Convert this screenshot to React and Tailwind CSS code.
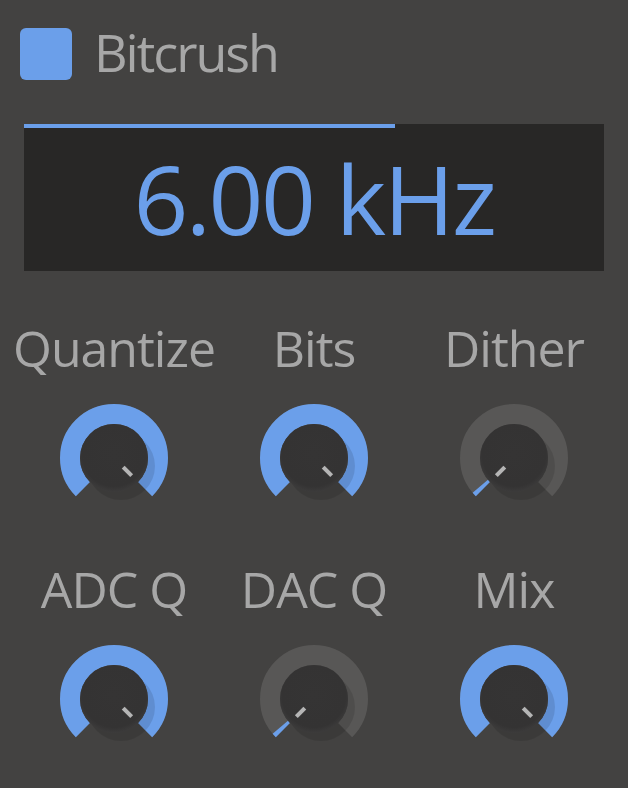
import { useState } from "react";

// point on a circle, angle in degrees clockwise from 12 o'clock
const polar = (cx, cy, r, deg) => {
  const a = ((deg - 90) * Math.PI) / 180;
  return [cx + r * Math.cos(a), cy + r * Math.sin(a)];
};

const arcPath = (cx, cy, r, from, to) => {
  const [x1, y1] = polar(cx, cy, r, from);
  const [x2, y2] = polar(cx, cy, r, to);
  const large = to - from > 180 ? 1 : 0;
  return `M ${x1} ${y1} A ${r} ${r} 0 ${large} 1 ${x2} ${y2}`;
};

function Knob({ value }) {
  const start = -135;
  const end = 135;
  const angle = start + (end - start) * value;
  const fillTo = Math.max(angle, start + 5);
  const [px1, py1] = polar(60, 60, 13, angle);
  const [px2, py2] = polar(60, 60, 25, angle);

  return (
    <svg width="120" height="120" viewBox="0 0 120 120">
      <defs>
        <radialGradient id="face" cx="50%" cy="45%" r="55%">
          <stop offset="0%" stopColor="#353434" />
          <stop offset="85%" stopColor="#343333" />
          <stop offset="100%" stopColor="#3c3b3b" />
        </radialGradient>
      </defs>
      <path d={arcPath(60, 60, 44, start, end)} stroke="#585756" strokeWidth="20" fill="none" />
      <path d={arcPath(60, 60, 44, start, fillTo)} stroke="#6b9fea" strokeWidth="20" fill="none" />
      <circle cx="67" cy="68" r="34" fill="rgba(0,0,0,0.11)" />
      <circle cx="60" cy="60" r="34" fill="url(#face)" />
      <line x1={px1} y1={py1} x2={px2} y2={py2} stroke="#b5b5b5" strokeWidth="4" />
    </svg>
  );
}

const params = [
  { name: "Quantize", value: 1 },
  { name: "Bits", value: 1 },
  { name: "Dither", value: 0 },
  { name: "ADC Q", value: 1 },
  { name: "DAC Q", value: 0 },
  { name: "Mix", value: 1 },
];

export default function App() {
  const [enabled] = useState(true);
  const freq = 0.64;

  return (
    <div
      className="w-[628px] h-[788px] bg-[#434241] pt-[28px] overflow-hidden"
      style={{ fontFamily: '"Open Sans", "Noto Sans", sans-serif' }}
    >
      <div className="flex items-center pl-[20px]">
        <div className={`w-[52px] h-[52px] rounded-[6px] ${enabled ? "bg-[#6b9fea]" : "bg-[#585756]"}`} />
        <span className="ml-[22px] text-[52px] leading-[52px] tracking-[-2px] text-[#a7a7a7] -mt-[4px]">Bitcrush</span>
      </div>

      <div className="ml-[24px] mt-[44px] w-[580px] h-[147px] bg-[#282726] flex flex-col">
        <div className="h-[4px] bg-[#6b9fea]" style={{ width: `${freq * 100}%` }} />
        <div className="flex-1 flex items-center justify-center -mt-[4px] text-[96px] leading-none tracking-[-2.5px] text-[#6b9fea]">
          6.00 kHz
        </div>
      </div>

      <div className="ml-[14px] mt-[52px] w-[600px] grid grid-cols-3 gap-y-[46px]">
        {params.map((p) => (
          <div key={p.name} className="flex flex-col items-center">
            <span className="text-[50px] leading-[50px] tracking-[-1px] text-[#a7a7a7] whitespace-nowrap">{p.name}</span>
            <div className="mt-[25px]">
              <Knob value={p.value} />
            </div>
          </div>
        ))}
      </div>
    </div>
  );
}
